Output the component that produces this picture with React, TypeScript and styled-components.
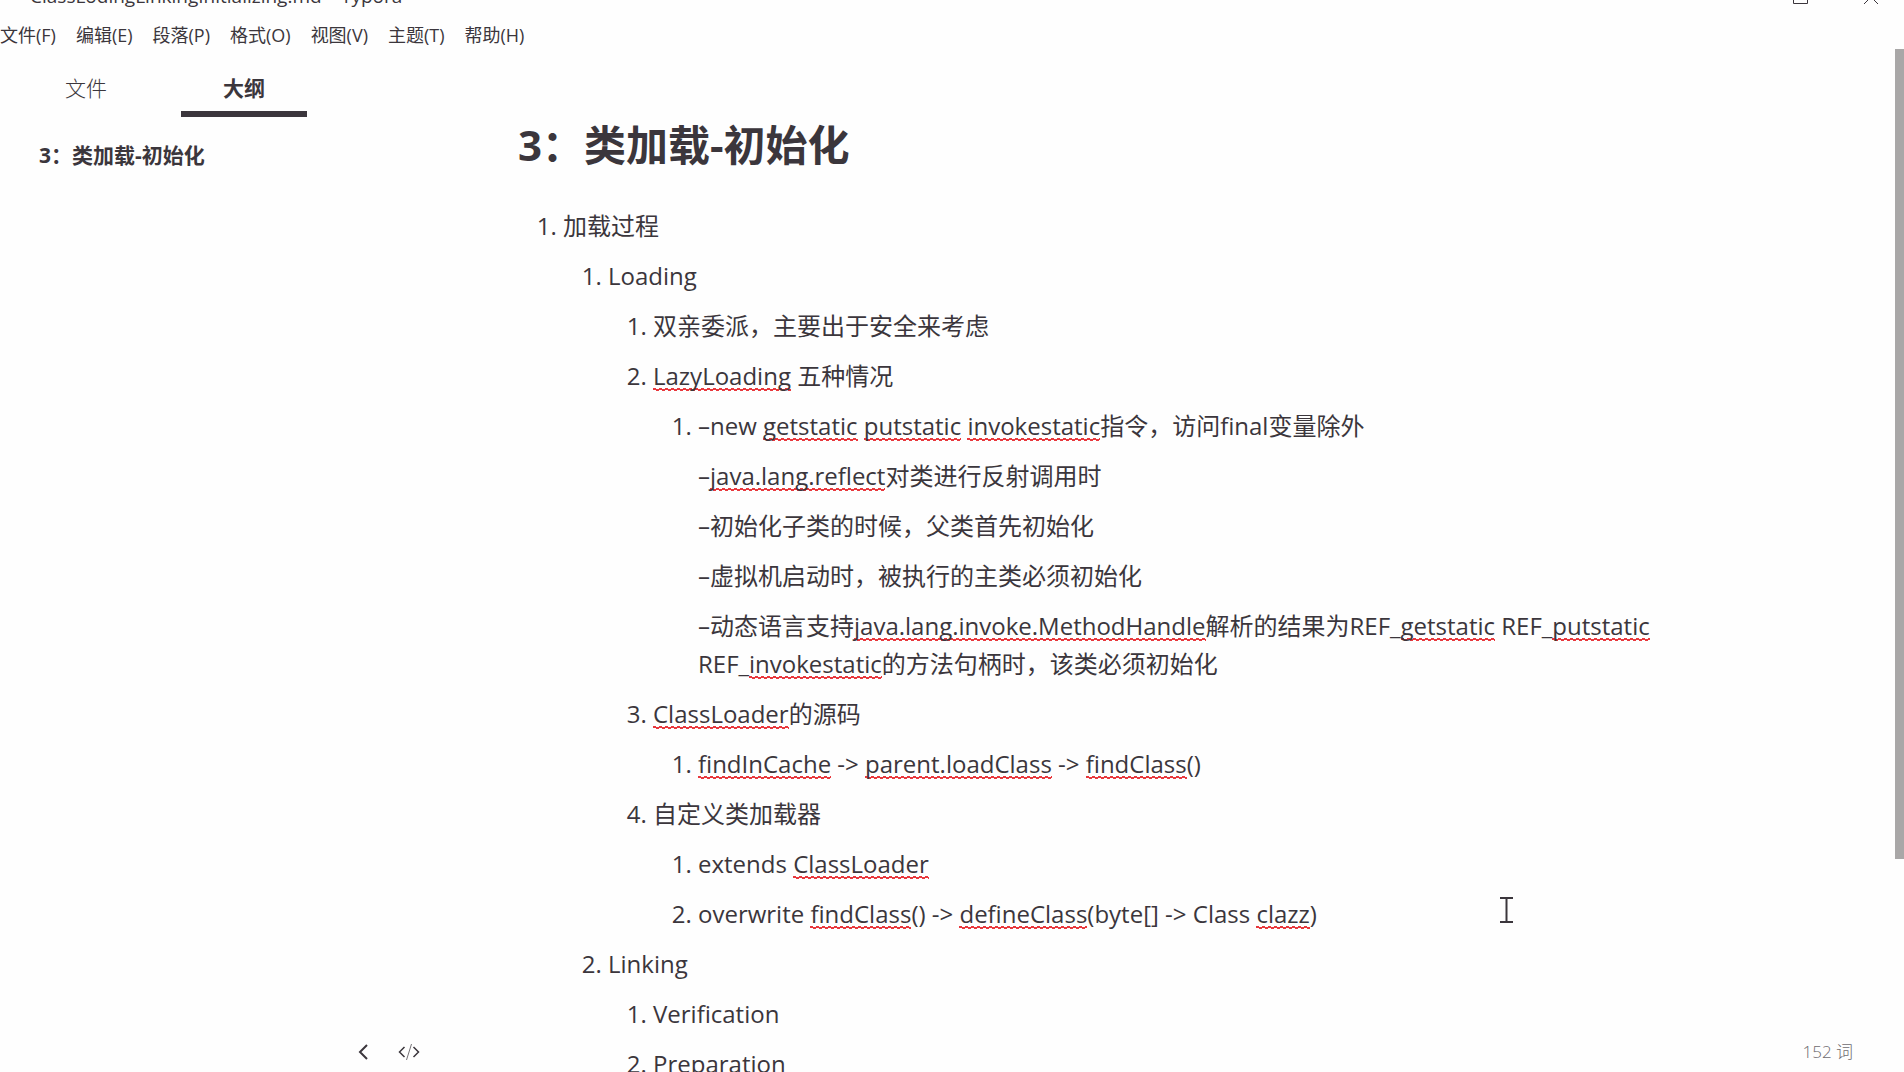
import React from "react";
import styled, { createGlobalStyle } from "styled-components";

const ink = "#3b363c";
const red = "#e8383d";

const GlobalStyle = createGlobalStyle`
  * { box-sizing: border-box; }
  body {
    margin: 0;
    background: #fefefe;
    color: ${ink};
    font-family: "Open Sans", "Noto Sans CJK SC", sans-serif;
  }
  button {
    padding: 0;
    border: 0;
    background: none;
    color: inherit;
    font: inherit;
  }
`;

const Window = styled.div`
  display: flex;
  flex-direction: column;
  height: 100vh;
  overflow: hidden;
`;

const TitleBar = styled.header`
  display: flex;
  align-items: flex-end;
  justify-content: space-between;
  height: 12px;
  flex: none;
  padding: 0 25px 2px 10px;
  overflow: hidden;
`;

const TitleText = styled.div`
  display: flex;
  gap: 15px;
  font-size: 19px;
  line-height: 28px;
`;

const WindowControls = styled.div`
  display: flex;
  gap: 56px;
  padding-bottom: 4px;
`;

const ControlButton = styled.button`
  display: flex;
`;

const MenuBar = styled.nav`
  display: flex;
  flex: none;
  gap: 20px;
  height: 48px;
  padding-bottom: 2px;
  align-items: center;
`;

const MenuButton = styled.button`
  font-size: 18px;
  line-height: 24px;
  white-space: nowrap;
`;

const Workspace = styled.div`
  display: flex;
  flex: 1;
  min-height: 0;
`;

const Sidebar = styled.aside`
  flex: none;
  width: 330px;
  padding: 0 7px;
`;

const Tabs = styled.div`
  display: flex;
`;

const Tab = styled.button<{ $active?: boolean }>`
  flex: 1;
  height: 57px;
  margin: 0 16px;
  font-size: 21px;
  line-height: 28px;
  padding-top: 4px;
  font-weight: ${(p) => (p.$active ? 700 : 300)};
  border-bottom: 6px solid ${(p) => (p.$active ? ink : "transparent")};
`;

const Outline = styled.nav`
  padding: 24px 32px;
`;

const OutlineLink = styled.a`
  color: inherit;
  font-size: 21px;
  font-weight: 700;
  line-height: 28px;
  text-decoration: none;
`;

const Main = styled.main`
  position: relative;
  flex: 1;
  min-width: 0;
`;

const Article = styled.article`
  max-width: 1198px;
  margin: 0 auto;
`;

const Heading = styled.h1`
  margin: 0;
  padding: 59px 0 36px;
  font-size: 42px;
  line-height: 52px;
`;

const List = styled.ol`
  margin: 0;
  padding-left: 45px;
  font-size: 24px;
  line-height: 38px;
`;

const Paragraph = styled.p`
  margin: 0 0 12px;
`;

/* Zigzag made of three one-pixel rows: peaks, a solid middle, troughs. */
const Misspelled = styled.span`
  background-image: linear-gradient(90deg, ${red} 3px, transparent 3px),
    linear-gradient(${red}, ${red}),
    linear-gradient(90deg, transparent 3px, ${red} 3px);
  background-size: 6px 1px;
  background-repeat: repeat-x;
  background-position: left bottom 3px, left bottom 2px, left bottom 1px;
`;

const ScrollThumb = styled.div`
  position: absolute;
  top: -11px;
  right: 0;
  width: 9px;
  height: 80%;
  background: #a9a7a7;
`;

const StatusBar = styled.footer`
  position: absolute;
  left: 28px;
  right: 51px;
  bottom: 6px;
  display: flex;
  align-items: center;
  justify-content: space-between;
  height: 28px;
`;

const StatusActions = styled.div`
  display: flex;
  gap: 22px;
`;

const WordCount = styled.button`
  color: #6f6b70;
  font-size: 17px;
  font-weight: 300;
  line-height: 28px;
`;

const TextCursor = styled.svg`
  position: absolute;
  right: 390px;
  top: 837px;
`;

const menus = ["文件(F)", "编辑(E)", "段落(P)", "格式(O)", "视图(V)", "主题(T)", "帮助(H)"];

export default function App() {
  return (
    <Window>
      <GlobalStyle />
      <TitleBar>
        <TitleText>
          <span>·</span>
          <span>ClassLodingLinkingInitializing.md – Typora</span>
        </TitleText>
        <WindowControls>
          <ControlButton aria-label="最大化">
            <svg width="16" height="15" viewBox="0 0 16 15" fill="none" stroke={ink}>
              <path d="M1.5 0V12.5H15.5V0" />
            </svg>
          </ControlButton>
          <ControlButton aria-label="关闭">
            <svg width="15" height="15" viewBox="0 0 15 15" fill="none" stroke={ink}>
              <path d="M0 13L14 -1M14 13L0 -1" />
            </svg>
          </ControlButton>
        </WindowControls>
      </TitleBar>
      <MenuBar>
        {menus.map((m) => (
          <MenuButton key={m}>{m}</MenuButton>
        ))}
      </MenuBar>
      <Workspace>
        <Sidebar>
          <Tabs>
            <Tab>文件</Tab>
            <Tab $active>大纲</Tab>
          </Tabs>
          <Outline>
            <OutlineLink href="#top">3：类加载-初始化</OutlineLink>
          </Outline>
        </Sidebar>
        <Main>
          <Article>
            <Heading id="top">3：类加载-初始化</Heading>
            <List>
              <li>
                <Paragraph>加载过程</Paragraph>
                <List>
                  <li>
                    <Paragraph>Loading</Paragraph>
                    <List>
                      <li>
                        <Paragraph>双亲委派，主要出于安全来考虑</Paragraph>
                      </li>
                      <li>
                        <Paragraph>
                          <Misspelled>LazyLoading</Misspelled> 五种情况
                        </Paragraph>
                        <List>
                          <li>
                            <Paragraph>
                              –new <Misspelled>getstatic</Misspelled> <Misspelled>putstatic</Misspelled>{" "}
                              <Misspelled>invokestatic</Misspelled>指令，访问final变量除外
                            </Paragraph>
                            <Paragraph>
                              –<Misspelled>java.lang.reflect</Misspelled>对类进行反射调用时
                            </Paragraph>
                            <Paragraph>–初始化子类的时候，父类首先初始化</Paragraph>
                            <Paragraph>–虚拟机启动时，被执行的主类必须初始化</Paragraph>
                            <Paragraph>
                              –动态语言支持<Misspelled>java.lang.invoke.MethodHandle</Misspelled>解析的结果为REF_
                              <Misspelled>getstatic</Misspelled> REF_<Misspelled>putstatic</Misspelled> REF_
                              <Misspelled>invokestatic</Misspelled>的方法句柄时，该类必须初始化
                            </Paragraph>
                          </li>
                        </List>
                      </li>
                      <li>
                        <Paragraph>
                          <Misspelled>ClassLoader</Misspelled>的源码
                        </Paragraph>
                        <List>
                          <li>
                            <Paragraph>
                              <Misspelled>findInCache</Misspelled> -&gt; <Misspelled>parent.loadClass</Misspelled>{" "}
                              -&gt; <Misspelled>findClass</Misspelled>()
                            </Paragraph>
                          </li>
                        </List>
                      </li>
                      <li>
                        <Paragraph>自定义类加载器</Paragraph>
                        <List>
                          <li>
                            <Paragraph>
                              extends <Misspelled>ClassLoader</Misspelled>
                            </Paragraph>
                          </li>
                          <li>
                            <Paragraph>
                              overwrite <Misspelled>findClass</Misspelled>() -&gt;{" "}
                              <Misspelled>defineClass</Misspelled>(byte[] -&gt; Class{" "}
                              <Misspelled>clazz</Misspelled>)
                            </Paragraph>
                          </li>
                        </List>
                      </li>
                    </List>
                  </li>
                  <li>
                    <Paragraph>Linking</Paragraph>
                    <List>
                      <li>
                        <Paragraph>Verification</Paragraph>
                      </li>
                      <li>
                        <Paragraph>Preparation</Paragraph>
                      </li>
                    </List>
                  </li>
                </List>
              </li>
            </List>
          </Article>
          <ScrollThumb />
          <TextCursor width="15" height="26" viewBox="0 0 15 26" fill="none" stroke={ink} strokeWidth="2">
            <path d="M1 1H14M1 25H14M7.5 1V25" />
          </TextCursor>
          <StatusBar>
            <StatusActions>
              <ControlButton aria-label="隐藏侧边栏">
                <svg width="18" height="18" viewBox="0 0 18 18" fill="none" stroke={ink} strokeWidth="2">
                  <path d="M9 2L2 9L9 16" />
                </svg>
              </ControlButton>
              <ControlButton aria-label="源代码模式">
                <svg width="22" height="18" viewBox="0 0 22 18" fill="none" stroke={ink}>
                  <path d="M6.500 4L1.500 9L6.500 14M15.500 4L20.500 9L15.500 14" strokeWidth="1.500" />
                  <path d="M13.500 1L8.500 17" opacity="0.700" />
                </svg>
              </ControlButton>
            </StatusActions>
            <WordCount>152 词</WordCount>
          </StatusBar>
        </Main>
      </Workspace>
    </Window>
  );
}
